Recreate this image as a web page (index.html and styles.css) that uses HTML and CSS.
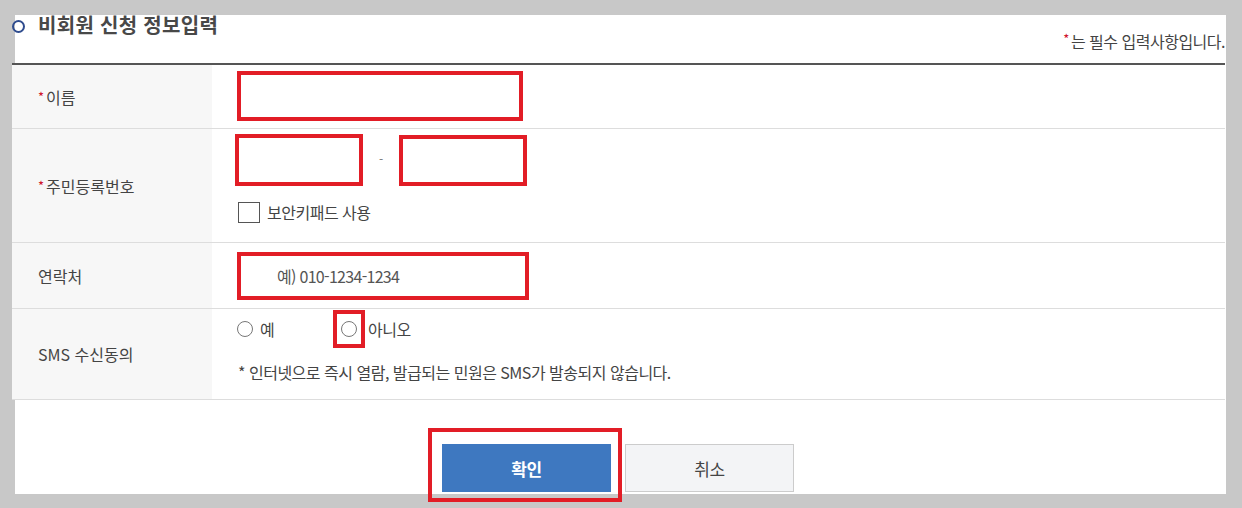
FILE: index.html
```html
<!DOCTYPE html>
<html lang="ko">
<head>
<meta charset="utf-8">
<title>비회원 신청 정보입력</title>
<link rel="stylesheet" href="styles.css">
</head>
<body>
<div class="panel">
  <div class="head">
    <h2 class="title"><span class="bullet"></span>비회원 신청 정보입력</h2>
    <p class="req-note"><span class="star">*</span>는 필수 입력사항입니다.</p>
  </div>
  <div class="form">
    <div class="row row-name">
      <div class="label"><span class="star">*</span>이름</div>
      <div class="field"><input class="box box-name" type="text"></div>
    </div>
    <div class="row row-id">
      <div class="label"><span class="star">*</span>주민등록번호</div>
      <div class="field field-col">
        <div class="id-line">
          <input class="box box-id1" type="text">
          <span class="dash">-</span>
          <input class="box box-id2" type="text">
        </div>
        <label class="check"><span class="checkbox"></span>보안키패드 사용</label>
      </div>
    </div>
    <div class="row row-tel">
      <div class="label">연락처</div>
      <div class="field"><input class="box box-tel" type="text" placeholder="예) 010-1234-1234"></div>
    </div>
    <div class="row row-sms">
      <div class="label">SMS 수신동의</div>
      <div class="field field-col">
        <div class="radios">
          <label class="radio radio-yes"><span class="circle"></span>예</label>
          <label class="radio radio-no"><span class="mark"><span class="circle"></span></span>아니오</label>
        </div>
        <p class="sms-note">* 인터넷으로 즉시 열람, 발급되는 민원은 SMS가 발송되지 않습니다.</p>
      </div>
    </div>
  </div>
  <div class="buttons">
    <div class="mark-btn"><button class="btn btn-ok" type="button">확인</button></div>
    <button class="btn btn-cancel" type="button">취소</button>
  </div>
</div>
</body>
</html>
```

FILE: styles.css
```css
* { box-sizing: border-box; }
html, body { margin: 0; padding: 0; }
body {
  background: #c8c8c8;
  font-family: "Noto Sans CJK KR", "Noto Sans", sans-serif;
  color: #444;
  width: 1242px;
  height: 508px;
  overflow: hidden;
}
.panel {
  margin: 15px 0 0 15px;
  width: 1211px;
  height: 479px;
  background: #fff;
}
.head {
  display: flex;
  justify-content: space-between;
  align-items: flex-start;
  height: 48px;
  margin-left: -3px;
  margin-right: 1px;
}
.title {
  margin: 0;
  display: flex;
  align-items: center;
  font-size: 20px;
  font-weight: 700;
  line-height: 20px;
  height: 20px;
  color: #484848;
  letter-spacing: 0.3px;
}
.bullet {
  width: 13px;
  height: 13px;
  border: 2px solid #2f4c8e;
  border-radius: 50%;
  margin: 2px 13px 0 0;
}
.req-note {
  margin: 16px 0 0 0;
  font-size: 16px;
  line-height: 16px;
  letter-spacing: -0.5px;
  color: #444;
}
.star { color: #d0102a; font-size: 13px; vertical-align: 4px; margin-right: 2px; }
.form {
  border-top: 2px solid #555;
  margin-left: -3px;
  margin-right: 1px;
}
.row {
  display: grid;
  grid-template-columns: 200px 1fr;
  border-bottom: 1px solid #ddd;
}
.row-name { height: 64px; }
.row-id { height: 114px; }
.row-tel { height: 66px; }
.row-sms { height: 91px; }
.label {
  background: #f7f7f7;
  padding-left: 26px;
  display: flex;
  align-items: center;
  font-size: 16px;
  letter-spacing: 0;
  color: #444;
}
.field {
  padding-left: 25px;
  display: flex;
  align-items: center;
}
.field-col {
  flex-direction: column;
  align-items: flex-start;
  justify-content: flex-start;
}
.box {
  border: 4px solid #e21d26;
  background: #fff;
  outline: none;
  font-family: inherit;
  display: block;
}
.box-name { width: 286px; height: 50px; margin-top: -1px; }
.row-id .field { padding-left: 23px; }
.id-line { display: flex; align-items: center; margin-top: 5px; }
.box-id1 { width: 128px; height: 52px; }
.box-id2 { width: 128px; height: 51px; margin-top: 1px; }
.dash { width: 36px; text-align: center; color: #777; font-size: 12px; padding-bottom: 4px; }
.check {
  display: flex;
  align-items: center;
  margin: 14px 0 0 3px;
  font-size: 16px;
  letter-spacing: -0.5px;
  color: #444;
}
.checkbox {
  width: 22px;
  height: 21px;
  border: 1px solid #555;
  background: #fff;
  margin-right: 7px;
}
.box-tel {
  width: 292px;
  height: 48px;
  margin-top: 1px;
  padding-left: 36px;
  font-size: 16px;
  letter-spacing: -0.7px;
}
.box-tel::placeholder { color: #555; }
.radios { display: flex; align-items: center; margin-top: 1px; height: 38px; }
.radio {
  display: flex;
  align-items: center;
  font-size: 16px;
  letter-spacing: -0.5px;
  color: #444;
}
.radio-yes { width: 96px; }
.circle {
  width: 16px;
  height: 16px;
  border: 1px solid #777;
  border-radius: 50%;
  background: #fff;
  display: block;
}
.radio-yes .circle { margin-right: 7px; }
.mark {
  width: 32px;
  height: 38px;
  border: 4px solid #e21d26;
  display: flex;
  align-items: center;
  justify-content: center;
  margin-right: 3px;
}
.sms-note {
  margin: 12px 0 0 1px;
  font-size: 16px;
  letter-spacing: -0.5px;
  color: #444;
}
.buttons {
  display: flex;
  align-items: flex-start;
  padding-left: 413px;
  margin-top: 28px;
}
.mark-btn {
  width: 194px;
  height: 74px;
  border: 4px solid #e21d26;
  padding: 12px 0 0 10px;
}
.btn {
  font-family: inherit;
  font-size: 17px;
  letter-spacing: -0.5px;
  width: 169px;
  height: 48px;
  cursor: pointer;
}
.btn-ok {
  background: #3e78c0;
  color: #fff;
  border: none;
  font-weight: 700;
}
.btn-cancel {
  margin: 16px 0 0 3px;
  background: #f3f4f6;
  border: 1px solid #ccc;
  color: #444;
}
```
